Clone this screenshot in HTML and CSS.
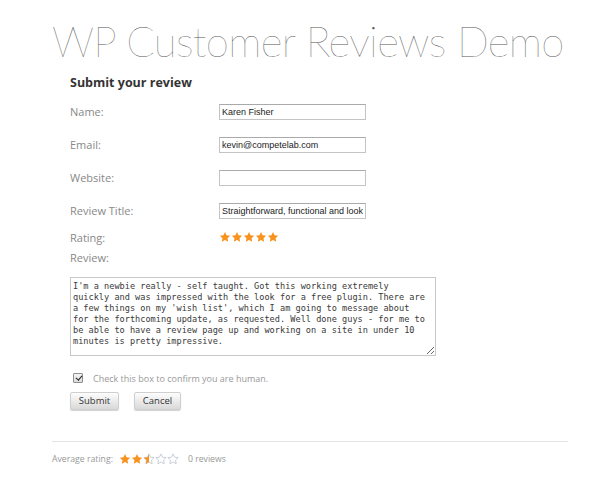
FILE: index.html
```html
<!DOCTYPE html>
<html lang="en">
<head>
<meta charset="utf-8">
<title>WP Customer Reviews Demo</title>
<link rel="stylesheet" href="styles.css">
</head>
<body>
<svg class="defs" width="0" height="0" aria-hidden="true">
  <defs>
    <symbol id="star" viewBox="0 0 24 24">
      <path d="M12 1.8l3.1 6.6 7.2.9-5.3 5 1.4 7.2L12 18 5.6 21.5 7 14.3l-5.3-5 7.2-.9z"/>
    </symbol>
    <clipPath id="half"><rect x="0" y="0" width="12" height="24"/></clipPath>
  </defs>
</svg>
<div class="page">
  <h1 class="title">WP Customer Reviews Demo</h1>
  <form class="review-form">
    <h2 class="form-heading">Submit your review</h2>
    <div class="fields">
      <span class="label">Name:</span>
      <input class="text-input" type="text" value="Karen Fisher">
      <span class="label">Email:</span>
      <input class="text-input" type="text" value="kevin@competelab.com">
      <span class="label">Website:</span>
      <input class="text-input" type="text" value="">
      <span class="label">Review Title:</span>
      <input class="text-input" type="text" value="Straightforward, functional and looks great">
      <span class="label">Rating:</span>
      <span class="stars">
        <svg class="star full" viewBox="0 0 24 24"><use href="#star"/></svg>
        <svg class="star full" viewBox="0 0 24 24"><use href="#star"/></svg>
        <svg class="star full" viewBox="0 0 24 24"><use href="#star"/></svg>
        <svg class="star full" viewBox="0 0 24 24"><use href="#star"/></svg>
        <svg class="star full" viewBox="0 0 24 24"><use href="#star"/></svg>
      </span>
      <span class="label">Review:</span>
      <span></span>
    </div>
    <textarea class="review-text">I'm a newbie really - self taught. Got this working extremely
quickly and was impressed with the look for a free plugin. There are
a few things on my 'wish list', which I am going to message about
for the forthcoming update, as requested. Well done guys - for me to
be able to have a review page up and working on a site in under 10
minutes is pretty impressive.</textarea>
    <label class="human"><input class="human-check" type="checkbox" checked><span>Check this box to confirm you are human.</span></label>
    <div class="buttons">
      <button class="btn btn-submit" type="button">Submit</button>
      <button class="btn btn-cancel" type="button">Cancel</button>
    </div>
  </form>
  <hr class="divider">
  <div class="avg">
    <span class="avg-label">Average rating:</span>
    <span class="stars avg-stars">
      <svg class="star full" viewBox="0 0 24 24"><use href="#star"/></svg>
      <svg class="star full" viewBox="0 0 24 24"><use href="#star"/></svg>
      <svg class="star empty" viewBox="0 0 24 24"><use href="#star"/><g class="half-fill" clip-path="url(#half)"><use href="#star"/></g></svg>
      <svg class="star empty" viewBox="0 0 24 24"><use href="#star"/></svg>
      <svg class="star empty" viewBox="0 0 24 24"><use href="#star"/></svg>
    </span>
    <span class="avg-count">0 reviews</span>
  </div>
</div>
</body>
</html>
```
FILE: styles.css
```css
html, body {
  margin: 0;
  padding: 0;
  background: #ffffff;
}

body {
  font-family: "Open Sans", "Liberation Sans", sans-serif;
  color: #333;
}

.defs {
  position: absolute;
  width: 0;
  height: 0;
  overflow: hidden;
}

.page {
  width: 516px;
  padding: 19px 0 0 52px;
}

.title {
  margin: 0 0 -1px;
  font-family: "Lato", "Open Sans", sans-serif;
  font-weight: 100;
  font-size: 42px;
  line-height: 44px;
  height: 44px;
  color: #555;
  white-space: nowrap;
  letter-spacing: -0.7px;
}

.review-form {
  padding-left: 18px;
}

.form-heading {
  margin: 12px 0 3px;
  font-weight: 700;
  font-size: 12.5px;
  line-height: 18px;
  height: 18px;
  color: #333;
}

.fields {
  display: grid;
  grid-template-columns: 149px 147px;
  grid-template-rows: 33px 33px 33px 33px 22px 18px;
  align-items: center;
}

.label {
  font-size: 11px;
  line-height: 16px;
  color: #888;
}

.text-input {
  display: block;
  box-sizing: border-box;
  width: 147px;
  height: 16px;
  margin: 0;
  padding: 0 2px;
  border: 1px solid #c4c4c4;
  border-top-color: #aaa;
  border-radius: 0;
  background: #fff;
  font-family: "Liberation Sans", Arial, sans-serif;
  font-size: 9px;
  color: #222;
  outline: none;
}

.stars {
  display: flex;
  align-items: center;
  height: 12px;
  margin-top: -2px;
}

.star {
  width: 12px;
  height: 12px;
  display: block;
}

.star.full {
  fill: #f7931e;
}

.star.empty {
  fill: none;
  stroke: #b9c4cf;
  stroke-width: 1.6;
}

.star .half-fill {
  fill: #f7931e;
  stroke: none;
}

.review-text {
  display: block;
  box-sizing: border-box;
  width: 366px;
  height: 79px;
  margin: 10px 0 0;
  padding: 3px 2px;
  border: 1px solid #c8c8c8;
  border-radius: 0;
  font-family: "DejaVu Sans Mono", "Liberation Mono", monospace;
  font-size: 8.6px;
  line-height: 11px;
  color: #3a3a3a;
  white-space: pre;
  overflow: hidden;
  resize: both;
  outline: none;
}

.human {
  display: flex;
  align-items: center;
  height: 16px;
  margin-top: 14px;
  font-size: 9px;
  color: #999;
}

.human-check {
  appearance: none;
  -webkit-appearance: none;
  position: relative;
  box-sizing: border-box;
  width: 10px;
  height: 10px;
  margin: 0 10px 0 3px;
  border: 1px solid #8f8f8f;
  border-radius: 1px;
  background: linear-gradient(#f4f4f4, #dcdcdc);
}

.human-check:checked::after {
  content: "";
  position: absolute;
  left: 2.5px;
  top: 0;
  width: 2.5px;
  height: 5px;
  border: solid #222;
  border-width: 0 1.5px 1.5px 0;
  transform: rotate(40deg);
}

.buttons {
  display: flex;
  gap: 15px;
  margin-top: 6px;
}

.btn {
  box-sizing: border-box;
  height: 18px;
  padding: 0;
  border: 1px solid #cfcfcf;
  border-radius: 2px;
  background: linear-gradient(#fdfdfd, #d9d9d9);
  box-shadow: 0 1px 1px rgba(0, 0, 0, 0.18);
  font-family: "Open Sans", sans-serif;
  font-size: 9.5px;
  line-height: 16px;
  color: #333;
}

.btn-submit {
  width: 49px;
}

.btn-cancel {
  width: 47px;
}

.divider {
  margin: 31px 0 0;
  border: 0;
  border-top: 1px solid #e4e4e4;
  height: 0;
}

.avg {
  display: flex;
  align-items: center;
  height: 18px;
  margin-top: 8px;
  font-size: 8.7px;
  color: #999;
}

.avg-stars {
  margin: 0 0 0 6px;
}

.avg-count {
  margin-left: 9px;
}
```
